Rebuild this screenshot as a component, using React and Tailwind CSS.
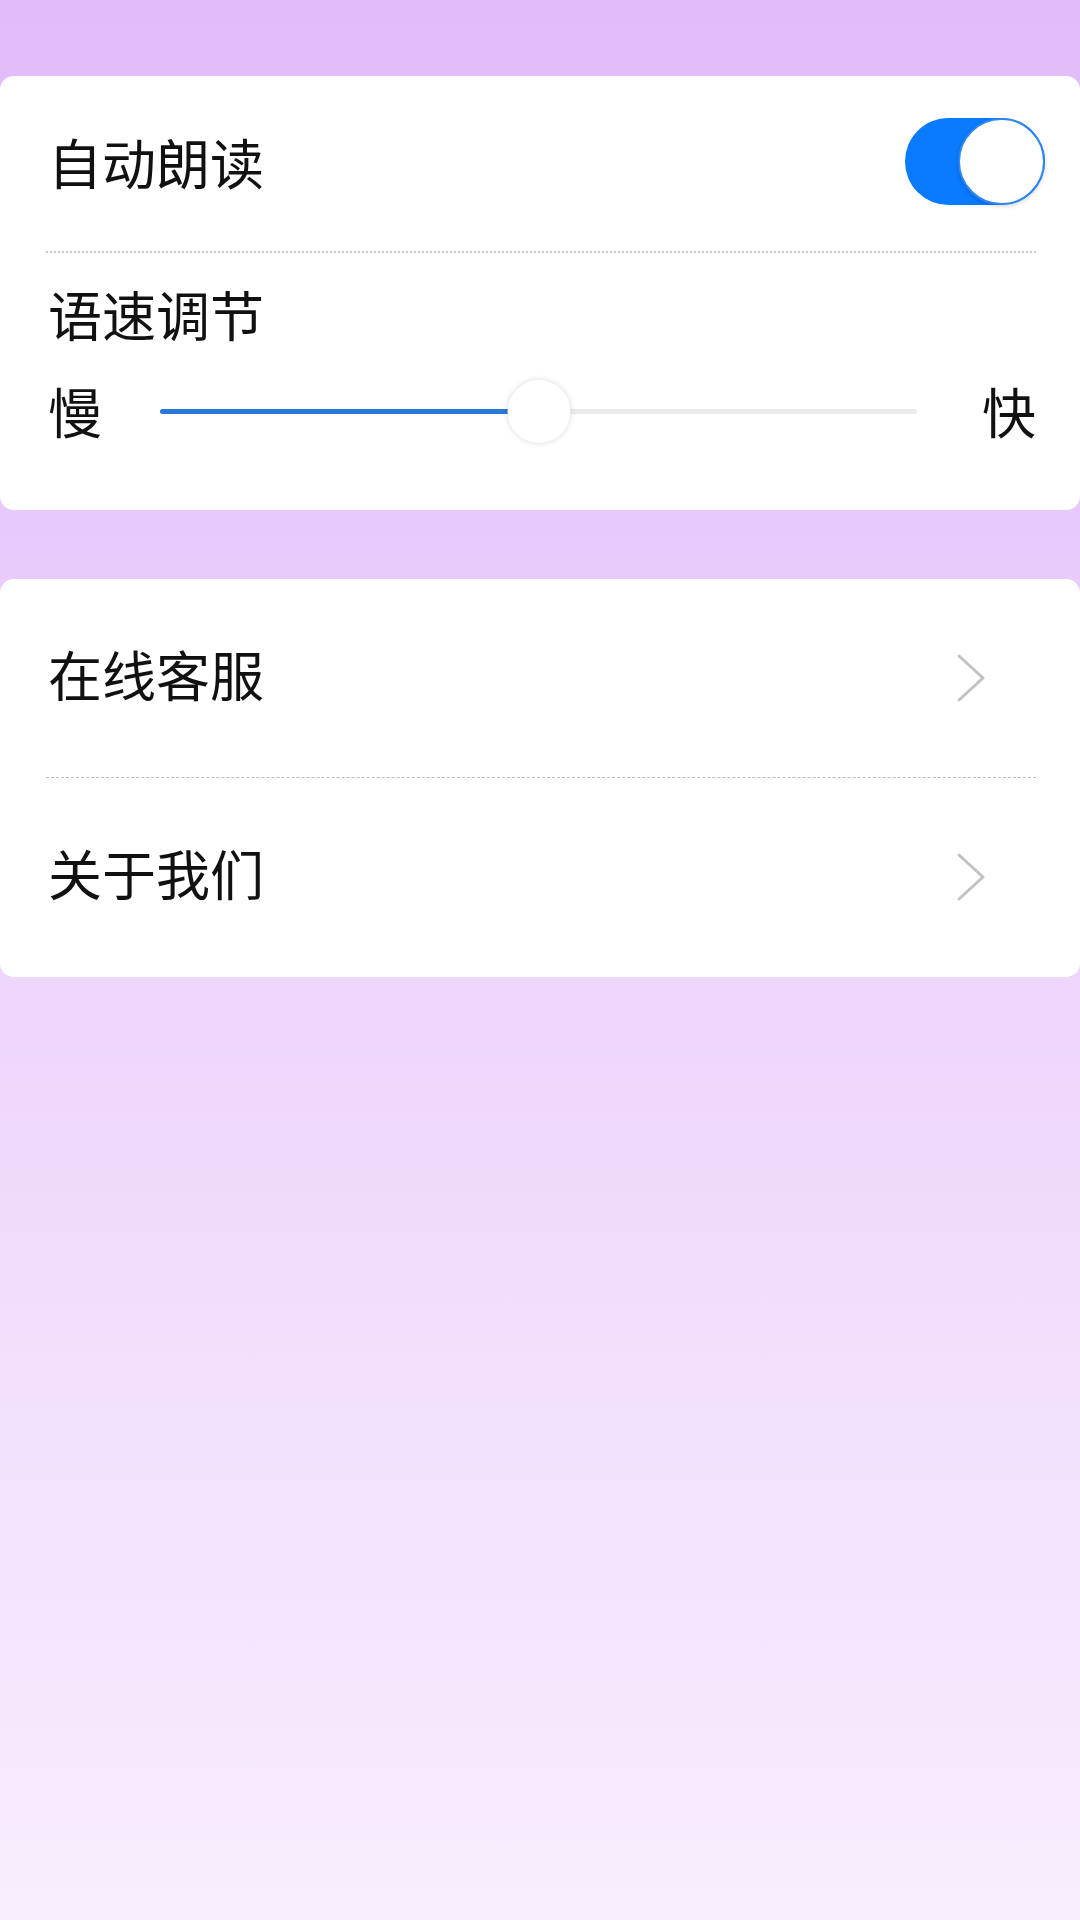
import React, { useState } from 'react';

const font = { fontFamily: '"Noto Sans CJK SC", "Noto Sans", sans-serif' };

const App = () => {
  const [autoRead, setAutoRead] = useState(true);
  const [speed, setSpeed] = useState(50);

  return (
    <div
      className="min-h-[1920px] w-[1080px] bg-gradient-to-b from-[#e2bbfa] to-[#f8eefd] pt-[76px] text-[#111]"
      style={font}
    >
      {/* Reading settings */}
      <div className="h-[434px] rounded-[14px] bg-white">
        <div className="flex h-[175px] items-center justify-between pb-[4px] pl-12 pr-[35px]">
          <span className="text-[54px] leading-none">自动朗读</span>
          <Toggle on={autoRead} onChange={() => setAutoRead(!autoRead)} />
        </div>
        <div className="ml-[46px] mr-[44px] border-t-2 border-dotted border-[#c8c8c8]" />

        <div className="mt-[34px] pl-12 text-[54px] leading-none">语速调节</div>

        <div className="mt-[38px] flex h-[64px] items-center pl-12 pr-[44px]">
          <span className="w-[54px] text-[54px] leading-none">慢</span>
          <Slider value={speed} onChange={setSpeed} />
          <span className="text-[54px] leading-none">快</span>
        </div>
      </div>

      {/* Other */}
      <div className="mt-[69px] h-[398px] rounded-[14px] bg-white">
        <LinkRow title="在线客服" />
        <div className="ml-[46px] mr-[44px] border-t border-dashed border-[#bdbdbd]" />
        <LinkRow title="关于我们" />
      </div>
    </div>
  );
};

const Toggle = ({ on, onChange }) => (
  <button
    onClick={onChange}
    className={`relative h-[87px] w-[140px] rounded-full ${on ? 'bg-[#0a7aff]' : 'bg-[#e5e5e5]'}`}
  >
    <span
      className={`absolute top-0 h-[87px] w-[87px] rounded-full border-2 border-[#2f86f0] bg-white shadow-[0_2px_4px_rgba(0,0,0,0.15)] ${on ? 'right-0' : 'left-0'}`}
    />
  </button>
);

const Slider = ({ value }) => (
  <div className="relative mx-[58px] mr-[65px] flex h-[64px] flex-1 items-center">
    <div className="h-[5px] w-full rounded-full bg-[#ebebeb]" />
    <div
      className="absolute left-0 h-[5px] rounded-full bg-[#2a78d8]"
      style={{ width: `${value}%` }}
    />
    <div
      className="absolute h-[63px] w-[63px] -translate-x-1/2 rounded-full bg-white shadow-[0_0_6px_rgba(0,0,0,0.15)]"
      style={{ left: `${value}%` }}
    />
  </div>
);

const LinkRow = ({ title }) => (
  <div className="flex h-[198px] items-center justify-between pb-[8px] pl-12 pr-[93px]">
    <span className="text-[54px] leading-none">{title}</span>
    <svg width="32" height="52" viewBox="0 0 32 52" fill="none" className="mt-[8px]">
      <polyline
        points="4,4 28,26 4,48"
        stroke="#c2c2c2"
        strokeWidth="3"
        strokeLinecap="round"
        strokeLinejoin="round"
      />
    </svg>
  </div>
);

export default App;
